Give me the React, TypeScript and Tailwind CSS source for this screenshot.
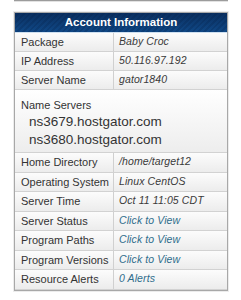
import React from 'react';

interface InfoRow {
  label: string;
  value: string;
  link?: boolean;
}

const topRows: InfoRow[] = [
  { label: 'Package', value: 'Baby Croc' },
  { label: 'IP Address', value: '50.116.97.192' },
  { label: 'Server Name', value: 'gator1840' },
];

const bottomRows: InfoRow[] = [
  { label: 'Home Directory', value: '/home/target12' },
  { label: 'Operating System', value: 'Linux CentOS' },
  { label: 'Server Time', value: 'Oct 11 11:05 CDT' },
  { label: 'Server Status', value: 'Click to View', link: true },
  { label: 'Program Paths', value: 'Click to View', link: true },
  { label: 'Program Versions', value: 'Click to View', link: true },
  { label: 'Resource Alerts', value: '0 Alerts', link: true },
];

const nameServers = ['ns3679.hostgator.com', 'ns3680.hostgator.com'];

const Row: React.FC<{ row: InfoRow; h: string }> = ({ row, h }) => (
  <div className={`flex ${h} border-b border-[#d2d2d2] bg-gradient-to-b from-[#fcfcfc] to-[#ececec]`}>
    <div className="w-[99px] shrink-0 border-r border-[#d0d0d0] pl-[6px] flex items-center whitespace-nowrap text-[11px] text-[#333]">
      {row.label}
    </div>
    <div
      className={`flex-1 pl-[5px] flex items-center whitespace-nowrap italic text-[10.5px] tracking-[0.1px] ${
        row.link ? 'text-[#2f6d8c]' : 'text-[#3a3a3a]'
      }`}
    >
      {row.value}
    </div>
  </div>
);

export default function App() {
  return (
    <div className="w-[241px] h-[300px] bg-white font-['Liberation_Sans',Arial,sans-serif]">
      {/* bottom edge of the box above */}
      <div className="ml-[14px] w-[214px] h-[2px] border-t border-[#9c9c9c] bg-[#e2e2e2]" />

      <div className="mt-[10px] ml-[14px] w-[214px] border border-[#a8a8a8] shadow-[0_0_0_1px_#ececec]">
        {/* header */}
        <div className="h-[20px] border-b border-[#cfe0f0] flex items-center justify-center bg-[linear-gradient(to_bottom,rgba(6,30,70,0.6),rgba(6,30,70,0)),repeating-linear-gradient(135deg,#104886_0px,#104886_2px,#0d3f78_2px,#0d3f78_4px)]">
          <span className="text-white font-bold text-[11.5px]">Account Information</span>
        </div>

        {topRows.map((r) => (
          <Row key={r.label} row={r} h="h-[19px]" />
        ))}

        {/* name servers */}
        <div className="h-[63px] border-b border-[#d2d2d2] bg-gradient-to-b from-[#ffffff] to-[#ededed] pl-[6px] pt-[8px]">
          <div className="text-[11px] text-[#333] leading-[14px]">Name Servers</div>
          <div className="pl-[8px] text-[13.5px] text-[#333] leading-[18px] mt-[1px]">
            {nameServers.map((ns) => (
              <div key={ns}>{ns}</div>
            ))}
          </div>
        </div>

        {bottomRows.map((r) => (
          <Row key={r.label} row={r} h="h-[19.5px]" />
        ))}
      </div>
    </div>
  );
}
